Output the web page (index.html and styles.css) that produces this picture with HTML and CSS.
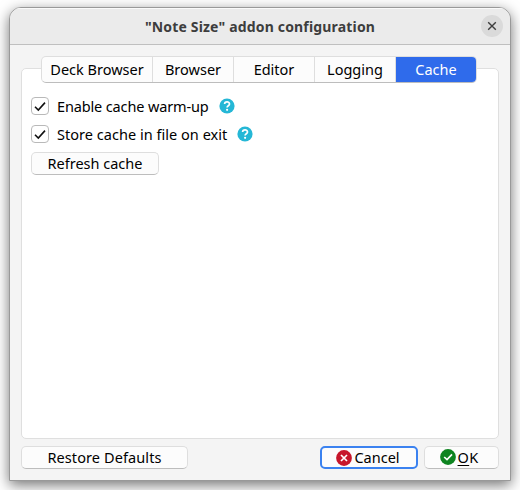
FILE: index.html
```html
<!DOCTYPE html>
<html lang="en">
<head>
<meta charset="utf-8">
<title>"Note Size" addon configuration</title>
<link rel="stylesheet" href="styles.css">
</head>
<body>
<div class="window">
  <header class="titlebar">
    <h1>"Note Size" addon configuration</h1>
    <button class="close" aria-label="Close"><svg width="22" height="22" viewBox="0 0 22 22"><path d="M7.2 7.2l7.6 7.6M14.8 7.2l-7.6 7.6" stroke="#3d3d3d" stroke-width="1.4"/></svg></button>
  </header>
  <main class="content">
    <nav class="tabs">
      <button class="tab wide"><span>Deck Browser</span></button>
      <button class="tab"><span>Browser</span></button>
      <button class="tab"><span>Editor</span></button>
      <button class="tab"><span>Logging</span></button>
      <button class="tab active"><span>Cache</span></button>
    </nav>
    <section class="pane">
      <div class="option">
        <span class="check"><svg width="16" height="16" viewBox="0 0 16 16"><path d="M3 8.7L6.3 12L13 4.6" fill="none" stroke="#111" stroke-width="1.6"/></svg></span>
        <span class="label enable">Enable cache warm-up</span>
        <svg class="help" width="16" height="16" viewBox="0 0 16 16"><circle cx="8" cy="8" r="7.6" fill="#25b7d6"/><path d="M5.6 6.1C5.6 3.2 10.5 3.3 10.5 6C10.5 7.7 8.1 7.7 8.1 9.5" fill="none" stroke="#fff" stroke-width="1.7"/><circle cx="8.1" cy="11.8" r="1.1" fill="#fff"/></svg>
      </div>
      <div class="option">
        <span class="check"><svg width="16" height="16" viewBox="0 0 16 16"><path d="M3 8.7L6.3 12L13 4.6" fill="none" stroke="#111" stroke-width="1.6"/></svg></span>
        <span class="label store">Store cache in file on exit</span>
        <svg class="help" width="16" height="16" viewBox="0 0 16 16"><circle cx="8" cy="8" r="7.6" fill="#25b7d6"/><path d="M5.6 6.1C5.6 3.2 10.5 3.3 10.5 6C10.5 7.7 8.1 7.7 8.1 9.5" fill="none" stroke="#fff" stroke-width="1.7"/><circle cx="8.1" cy="11.8" r="1.1" fill="#fff"/></svg>
      </div>
      <button class="btn refresh"><span>Refresh cache</span></button>
    </section>
    <footer class="actions">
      <button class="btn restore"><span>Restore Defaults</span></button>
      <button class="btn cancel"><svg width="16" height="16" viewBox="0 0 16 16"><circle cx="8" cy="8" r="7.9" fill="#c7162b"/><path d="M5 5l6 6M11 5l-6 6" stroke="#fff" stroke-width="1.7"/></svg><span>Cancel</span></button>
      <button class="btn ok"><svg width="16" height="16" viewBox="0 0 16 16"><circle cx="8" cy="8" r="7.9" fill="#0e8420"/><path d="M4.2 8L7 10.6L12 5.4" fill="none" stroke="#fff" stroke-width="1.7"/></svg><span><span class="mnemonic">O</span>K</span></button>
    </footer>
  </main>
</div>
</body>
</html>
```
FILE: styles.css
```css
* { box-sizing: border-box; }
body {
  margin: 0;
  width: 520px;
  height: 490px;
  overflow: hidden;
  padding: 7px 9px 9px;
  background: #fff;
  font: 14.5px/20px "Noto Sans", sans-serif;
  color: #000;
}
button { font: inherit; color: inherit; margin: 0; padding: 0; }
span { white-space: nowrap; }
svg { display: block; flex: none; }
.window {
  width: 502px;
  height: 474px;
  border: 1px solid #999;
  border-radius: 12px 12px 0 0;
  background: #f4f4f4;
  overflow: hidden;
  box-shadow: 0 4px 14px rgba(0, 0, 0, .55);
}
.titlebar {
  display: flex;
  align-items: center;
  height: 37px;
  padding: 0 7px 0 29px;
  background: #ebebeb;
  border-bottom: 1px solid #bfbfbf;
  box-shadow: inset 0 1px #fafafa;
}
h1 {
  flex: 1;
  margin: 0;
  padding-top: 2px;
  text-align: center;
  font-size: 14px;
  line-height: 20px;
  letter-spacing: .17px;
  font-weight: 700;
  color: #3d3d3d;
}
.close {
  width: 22px;
  height: 22px;
  border: 0;
  border-radius: 50%;
  background: #dadada;
}
.content { padding: 11px 11px 0; }
.tabs {
  position: relative;
  display: flex;
  width: 436px;
  height: 27px;
  margin: 0 0 -15px 20px;
  border: 1px solid #dedede;
  border-bottom-color: #bdbdbd;
  border-radius: 5px;
  background: #fcfcfc;
}
.tab {
  width: 81px;
  padding-bottom: 2px;
  border: 0;
  border-right: 1px solid #dedede;
  background: none;
  display: flex;
  align-items: center;
  justify-content: center;
}
.tab.wide { width: 111px; }
.tab.active {
  width: 80px;
  height: 25px;
  border: 0;
  background: #2f6beb;
  color: #fff;
  border-radius: 0 4px 4px 0;
}
.pane {
  height: 371px;
  width: 478px;
  padding: 28px 9px 0;
  border: 1px solid #dfdfdf;
  border-radius: 5px;
  background: #fff;
}
.option { display: flex; align-items: center; height: 18px; margin-bottom: 10px; }
.check {
  width: 18px;
  height: 18px;
  border: 1px solid #b9b9b9;
  border-radius: 4px;
  background: #fff;
}
.label { margin: 0 10px 0 8px; }
.enable { letter-spacing: -.14px; }
.store { letter-spacing: .03px; }
.btn {
  display: flex;
  align-items: center;
  justify-content: center;
  height: 23px;
  padding-bottom: 2px;
  border: 1px solid #dedede;
  border-bottom-color: #bdbdbd;
  border-radius: 5px;
  background: #fcfcfc;
}
.refresh { width: 128px; margin-top: -1px; }
.actions { display: flex; width: 478px; margin-top: 7px; }
.restore { width: 167px; letter-spacing: .1px; }
.cancel { width: 98px; margin: 0 6px 0 auto; padding: 0 2px 0 0; border: 2px solid #3b82f0; gap: 2px; }
.cancel span { margin-top: -2px; }
.ok { width: 75px; padding-right: 5px; gap: 2px; letter-spacing: .3px; }
.mnemonic { text-decoration: underline 1px; text-underline-offset: 2px; text-decoration-skip-ink: none; }
```
